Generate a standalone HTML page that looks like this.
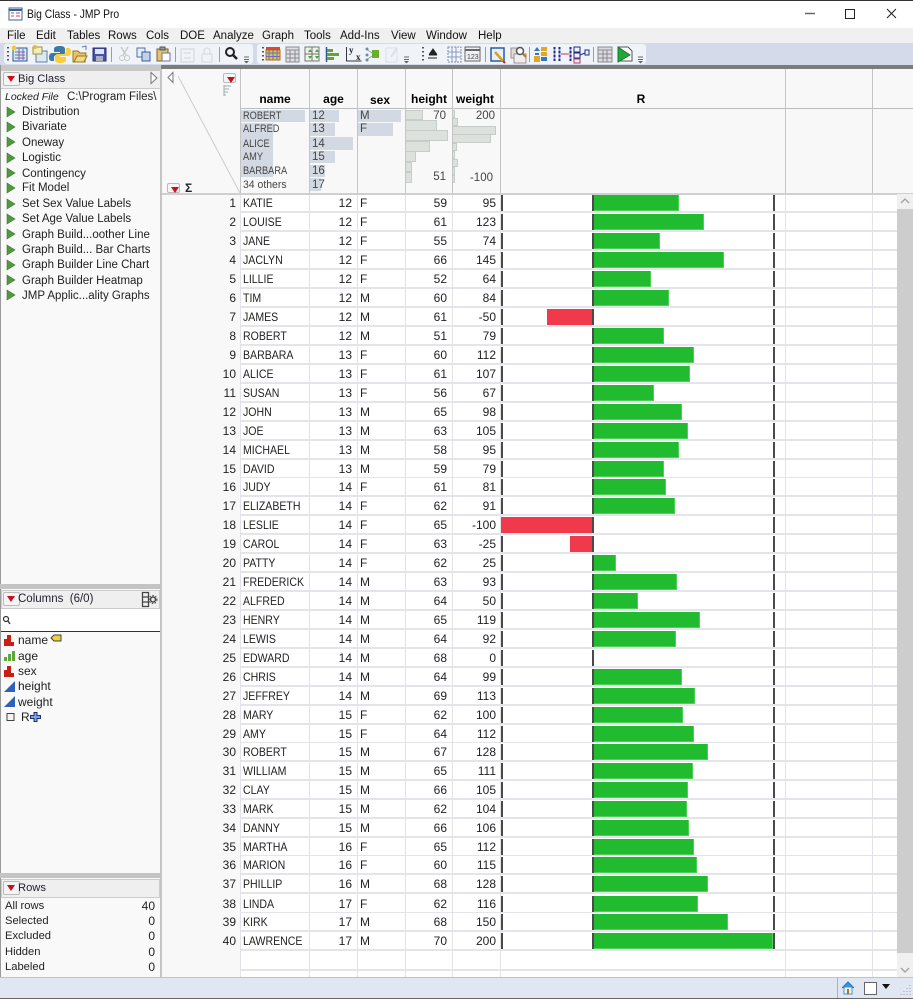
<!DOCTYPE html>
<html><head><meta charset="utf-8"><title>Big Class - JMP Pro</title>
<style>
*{box-sizing:border-box}
html,body{margin:0;padding:0;width:913px;height:999px;overflow:hidden;background:#fff}
body{position:relative;font:12px "Liberation Sans",sans-serif;color:#222}
.a{position:absolute;white-space:nowrap;line-height:14px}
.b{position:absolute}
.m{top:29px;font-size:11.5px;color:#111}
.l{left:22px;font-size:11.5px}
.p{font-size:11.2px}
.r{position:absolute;left:162px;width:735px;height:19px;background:
linear-gradient(#4a4a4a,#4a4a4a) 339px var(--t,1px)/2px 16px no-repeat,
linear-gradient(#4a4a4a,#4a4a4a) 430px var(--t,1px)/2px 16px no-repeat,
linear-gradient(#4a4a4a,#4a4a4a) 611px var(--t,1px)/2px 16px no-repeat,
linear-gradient(#f8f8f8,#f8f8f8) 0 0/78px 100% no-repeat,
linear-gradient(#e4e4ea,#e4e4ea) 0 var(--o,17px)/100% 2px no-repeat,#fff;line-height:17px}
.f{--t:0px;--o:16px;height:18px}
.r span{position:absolute;top:1px;line-height:16px;white-space:nowrap}
.f span{top:0}
.f .g{top:0 !important}
.r span:nth-child(1){right:661px}
.r span:nth-child(2){left:81px;transform:scaleX(.88);transform-origin:0 50%}
.r span:nth-child(3){right:545px}
.r span:nth-child(4){left:198px}
.r span:nth-child(5){right:450px}
.r span:nth-child(6){right:401px}
.r .g{left:432px;top:1px;height:16px;background:#20bb2e;border-right:1px solid #4fcf58;border-bottom:1px solid #4fcf58}
.r .n{top:1px;height:16px;background:#f03a4c;right:auto}
.v{position:absolute;top:195px;width:1px;height:782px;background:#e2e2ea}
.h{position:absolute;top:69px;width:1px;height:124px;background:#c4c4c4}
.t{top:92px;font-weight:bold;font-size:12px;color:#000;text-align:center}
.s{position:absolute;background:#d3d9e3}
.d{position:absolute;background:#dde1dd;border:1px solid #c6ccc6;border-left:0}
.x{font-size:11.5px;color:#444}
.y{font-size:11px;color:#444;transform:scaleX(.84);transform-origin:0 50%}
.tri{position:absolute;width:17px;height:14px;background:#f4f4f4;border:1px solid #bbb;border-radius:2px}
.tri:after{content:"";position:absolute;left:3px;top:3px;border:4.500px solid transparent;border-top:6px solid #c8101c;border-bottom:0}
</style></head><body>
<!-- chrome -->
<div class="b" style="left:0;top:0;width:913px;height:1px;background:#333"></div>
<div class="b" style="left:0;top:28px;width:913px;height:15px;background:#f0f0f0"></div>
<div class="b" style="left:0;top:43px;width:913px;height:22px;background:#d5daea"></div>
<div class="b" style="left:4px;top:44px;width:249px;height:20px;background:#f0f4f9;border-radius:3px"></div>
<div class="b" style="left:257px;top:44px;width:389px;height:20px;background:#f0f4f9;border-radius:3px"></div>
<div class="b" style="left:0;top:65px;width:161px;height:6px;background:#c8c8c8"></div>
<div class="b" style="left:161px;top:65px;width:752px;height:4px;background:#7c7c7c"></div>
<div class="a" style="left:27px;top:7px;font-size:12px;color:#111;transform:scaleX(.86);transform-origin:0 50%">Big Class - JMP Pro</div>
<div class="a m" style="left:7px">File</div>
<div class="a m" style="left:36px">Edit</div>
<div class="a m" style="left:67px">Tables</div>
<div class="a m" style="left:108px">Rows</div>
<div class="a m" style="left:146px">Cols</div>
<div class="a m" style="left:180px">DOE</div>
<div class="a m" style="left:213px">Analyze</div>
<div class="a m" style="left:262px">Graph</div>
<div class="a m" style="left:304px">Tools</div>
<div class="a m" style="left:340px">Add-Ins</div>
<div class="a m" style="left:391px">View</div>
<div class="a m" style="left:426px">Window</div>
<div class="a m" style="left:478px">Help</div>

<!-- left panels -->
<div class="b" style="left:0;top:71px;width:160px;height:906px;background:#f9f9f9"></div>
<div class="b" style="left:0;top:65px;width:1px;height:912px;background:#9a9a9a"></div>
<div class="b" style="left:160px;top:69px;width:2px;height:908px;background:#c4c4c4"></div>
<div class="b" style="left:1px;top:71px;width:159px;height:18px;background:#efefef;border-bottom:1px solid #ccc"></div>
<div class="tri" style="left:3px;top:72px"></div>
<div class="a p" style="left:18px;top:72px;color:#223">Big Class</div>
<div class="a" style="left:5px;top:90px;font-size:10.5px"><i>Locked File</i></div>
<div class="a" style="left:67px;top:90px;width:92px;overflow:hidden;font-size:11.5px">C:\Program Files\</div>
<div class="a l" style="top:105px">Distribution</div>
<div class="a l" style="top:120px">Bivariate</div>
<div class="a l" style="top:136px">Oneway</div>
<div class="a l" style="top:151px">Logistic</div>
<div class="a l" style="top:167px">Contingency</div>
<div class="a l" style="top:181px">Fit Model</div>
<div class="a l" style="top:197px">Set Sex Value Labels</div>
<div class="a l" style="top:212px">Set Age Value Labels</div>
<div class="a l" style="top:228px">Graph Build...oother Line</div>
<div class="a l" style="top:243px">Graph Build... Bar Charts</div>
<div class="a l" style="top:258px">Graph Builder Line Chart</div>
<div class="a l" style="top:274px">Graph Builder Heatmap</div>
<div class="a l" style="top:289px">JMP Applic...ality Graphs</div>

<div class="b" style="left:0;top:584px;width:160px;height:5px;background:#c4c4c4"></div>
<div class="b" style="left:1px;top:590px;width:159px;height:19px;background:#efefef;border:1px solid #ccc"></div>
<div class="tri" style="left:3px;top:592px"></div>
<div class="a" style="left:18px;top:592px;color:#223;font-size:11.5px">Columns &nbsp;(6/0)</div>
<div class="b" style="left:1px;top:609px;width:159px;height:22px;background:#fff"></div>
<div class="b" style="left:1px;top:631px;width:159px;height:1px;background:#333"></div>
<div class="a" style="left:18px;top:633px">name</div>
<div class="a" style="left:18px;top:649px">age</div>
<div class="a" style="left:18px;top:664px">sex</div>
<div class="a" style="left:18px;top:679px">height</div>
<div class="a" style="left:18px;top:695px">weight</div>
<div class="a" style="left:21px;top:710px">R</div>

<div class="b" style="left:0;top:873px;width:160px;height:5px;background:#c4c4c4"></div>
<div class="b" style="left:1px;top:879px;width:159px;height:19px;background:#efefef;border:1px solid #ccc"></div>
<div class="tri" style="left:3px;top:881px"></div>
<div class="a p" style="left:18px;top:881px;color:#223">Rows</div>
<div class="a p" style="left:5px;top:899px">All rows</div><div class="a" style="right:758px;top:899px">40</div>
<div class="a p" style="left:5px;top:914px">Selected</div><div class="a" style="right:758px;top:914px">0</div>
<div class="a p" style="left:5px;top:929px">Excluded</div><div class="a" style="right:758px;top:929px">0</div>
<div class="a p" style="left:5px;top:945px">Hidden</div><div class="a" style="right:758px;top:945px">0</div>
<div class="a p" style="left:5px;top:960px">Labeled</div><div class="a" style="right:758px;top:960px">0</div>

<!-- table header -->
<div class="b" style="left:162px;top:69px;width:751px;height:125px;background:#f8f8f8"></div>
<div class="b" style="left:241px;top:108px;width:672px;height:1px;background:#bdbdbd"></div>
<div class="b" style="left:162px;top:193px;width:751px;height:2px;background:#cfcfcf"></div>
<div class="h" style="left:240px"></div><div class="h" style="left:309px"></div><div class="h" style="left:357px"></div><div class="h" style="left:405px"></div><div class="h" style="left:452px"></div><div class="h" style="left:500px"></div><div class="h" style="left:785px"></div><div class="h" style="left:872px"></div>
<div class="a t" style="left:241px;width:68px">name</div>
<div class="a t" style="left:310px;width:47px">age</div>
<div class="a t" style="left:358px;width:44px;top:93px">sex</div>
<div class="a t" style="left:406px;width:46px">height</div>
<div class="a t" style="left:453px;width:44px">weight</div>
<div class="a t" style="left:501px;width:280px">R</div>

<div class="s" style="left:241px;top:110px;width:64px;height:12px"></div>
<div class="s" style="left:241px;top:123px;width:32px;height:54px"></div>
<div class="s" style="left:310px;top:110px;width:29px;height:12px"></div>
<div class="s" style="left:310px;top:123px;width:25px;height:13px"></div>
<div class="s" style="left:310px;top:137px;width:43px;height:13px"></div>
<div class="s" style="left:310px;top:151px;width:25px;height:12px"></div>
<div class="s" style="left:310px;top:165px;width:15px;height:12px"></div>
<div class="s" style="left:310px;top:178px;width:11px;height:13px"></div>
<div class="s" style="left:358px;top:110px;width:43px;height:12px"></div>
<div class="s" style="left:358px;top:123px;width:35px;height:13px"></div>
<div class="a y" style="left:243px;top:109px">ROBERT</div>
<div class="a y" style="left:243px;top:122px">ALFRED</div>
<div class="a y" style="left:243px;top:137px">ALICE</div>
<div class="a y" style="left:243px;top:150px">AMY</div>
<div class="a y" style="left:243px;top:164px">BARBARA</div>
<div class="a y" style="left:243px;top:178px;transform:scaleX(.95)">34 others</div>
<div class="a x" style="left:312px;top:109px">12</div>
<div class="a x" style="left:312px;top:122px">13</div>
<div class="a x" style="left:312px;top:137px">14</div>
<div class="a x" style="left:312px;top:150px">15</div>
<div class="a x" style="left:312px;top:164px">16</div>
<div class="a x" style="left:312px;top:178px">17</div>
<div class="a x" style="left:360px;top:109px">M</div>
<div class="a x" style="left:360px;top:122px">F</div>

<div class="d" style="left:406px;top:110px;width:17px;height:10px"></div>
<div class="d" style="left:406px;top:120px;width:31px;height:11px"></div>
<div class="d" style="left:406px;top:130px;width:42px;height:11px"></div>
<div class="d" style="left:406px;top:141px;width:24px;height:11px"></div>
<div class="d" style="left:406px;top:151px;width:10px;height:11px"></div>
<div class="d" style="left:406px;top:162px;width:6px;height:10px"></div>
<div class="d" style="left:406px;top:172px;width:6px;height:11px"></div>
<div class="d" style="left:453px;top:110px;width:2px;height:8px"></div>
<div class="d" style="left:453px;top:118px;width:5px;height:8px"></div>
<div class="d" style="left:453px;top:126px;width:43px;height:9px"></div>
<div class="d" style="left:453px;top:134px;width:38px;height:9px"></div>
<div class="d" style="left:453px;top:143px;width:4px;height:8px"></div>
<div class="d" style="left:453px;top:151px;width:2px;height:8px"></div>
<div class="d" style="left:453px;top:159px;width:5px;height:8px"></div>
<div class="d" style="left:453px;top:167px;width:2px;height:8px"></div>
<div class="d" style="left:453px;top:175px;width:2px;height:8px"></div>
<div class="a x" style="right:467px;top:109px">70</div>
<div class="a x" style="right:467px;top:170px">51</div>
<div class="a x" style="right:418px;top:109px">200</div>
<div class="a x" style="right:420px;top:171px">-100</div>
<div class="tri" style="left:223px;top:73px;width:13px;height:10px"></div>
<div class="tri" style="left:167px;top:183px;width:13px;height:10px"></div>

<!-- rows -->
<div class="b" style="left:162px;top:195px;width:735px;height:782px;background:linear-gradient(#f8f8f8,#f8f8f8) 0 0/78px 100% no-repeat,#fff"></div>
<div class="r f" style="top:195px"><span>1</span><span>KATIE</span><span>12</span><span>F</span><span>59</span><span>95</span><span class="g" style="width:85px"></span></div>
<div class="r" style="top:213px"><span>2</span><span>LOUISE</span><span>12</span><span>F</span><span>61</span><span>123</span><span class="g" style="width:110px"></span></div>
<div class="r" style="top:232px"><span>3</span><span>JANE</span><span>12</span><span>F</span><span>55</span><span>74</span><span class="g" style="width:66px"></span></div>
<div class="r" style="top:251px"><span>4</span><span>JACLYN</span><span>12</span><span>F</span><span>66</span><span>145</span><span class="g" style="width:130px"></span></div>
<div class="r" style="top:270px"><span>5</span><span>LILLIE</span><span>12</span><span>F</span><span>52</span><span>64</span><span class="g" style="width:57px"></span></div>
<div class="r" style="top:289px"><span>6</span><span>TIM</span><span>12</span><span>M</span><span>60</span><span>84</span><span class="g" style="width:75px"></span></div>
<div class="r" style="top:308px"><span>7</span><span>JAMES</span><span>12</span><span>M</span><span>61</span><span>-50</span><span class="n" style="left:385px;width:45px"></span></div>
<div class="r" style="top:327px"><span>8</span><span>ROBERT</span><span>12</span><span>M</span><span>51</span><span>79</span><span class="g" style="width:70px"></span></div>
<div class="r" style="top:346px"><span>9</span><span>BARBARA</span><span>13</span><span>F</span><span>60</span><span>112</span><span class="g" style="width:100px"></span></div>
<div class="r" style="top:365px"><span>10</span><span>ALICE</span><span>13</span><span>F</span><span>61</span><span>107</span><span class="g" style="width:96px"></span></div>
<div class="r" style="top:384px"><span>11</span><span>SUSAN</span><span>13</span><span>F</span><span>56</span><span>67</span><span class="g" style="width:60px"></span></div>
<div class="r" style="top:403px"><span>12</span><span>JOHN</span><span>13</span><span>M</span><span>65</span><span>98</span><span class="g" style="width:88px"></span></div>
<div class="r" style="top:422px"><span>13</span><span>JOE</span><span>13</span><span>M</span><span>63</span><span>105</span><span class="g" style="width:94px"></span></div>
<div class="r" style="top:441px"><span>14</span><span>MICHAEL</span><span>13</span><span>M</span><span>58</span><span>95</span><span class="g" style="width:85px"></span></div>
<div class="r" style="top:460px"><span>15</span><span>DAVID</span><span>13</span><span>M</span><span>59</span><span>79</span><span class="g" style="width:70px"></span></div>
<div class="r" style="top:478px"><span>16</span><span>JUDY</span><span>14</span><span>F</span><span>61</span><span>81</span><span class="g" style="width:72px"></span></div>
<div class="r" style="top:497px"><span>17</span><span>ELIZABETH</span><span>14</span><span>F</span><span>62</span><span>91</span><span class="g" style="width:81px"></span></div>
<div class="r" style="top:516px"><span>18</span><span>LESLIE</span><span>14</span><span>F</span><span>65</span><span>-100</span><span class="n" style="left:339px;width:91px"></span></div>
<div class="r" style="top:535px"><span>19</span><span>CAROL</span><span>14</span><span>F</span><span>63</span><span>-25</span><span class="n" style="left:408px;width:22px"></span></div>
<div class="r" style="top:554px"><span>20</span><span>PATTY</span><span>14</span><span>F</span><span>62</span><span>25</span><span class="g" style="width:22px"></span></div>
<div class="r" style="top:573px"><span>21</span><span>FREDERICK</span><span>14</span><span>M</span><span>63</span><span>93</span><span class="g" style="width:83px"></span></div>
<div class="r" style="top:592px"><span>22</span><span>ALFRED</span><span>14</span><span>M</span><span>64</span><span>50</span><span class="g" style="width:44px"></span></div>
<div class="r" style="top:611px"><span>23</span><span>HENRY</span><span>14</span><span>M</span><span>65</span><span>119</span><span class="g" style="width:106px"></span></div>
<div class="r" style="top:630px"><span>24</span><span>LEWIS</span><span>14</span><span>M</span><span>64</span><span>92</span><span class="g" style="width:82px"></span></div>
<div class="r" style="top:649px"><span>25</span><span>EDWARD</span><span>14</span><span>M</span><span>68</span><span>0</span></div>
<div class="r" style="top:668px"><span>26</span><span>CHRIS</span><span>14</span><span>M</span><span>64</span><span>99</span><span class="g" style="width:88px"></span></div>
<div class="r" style="top:687px"><span>27</span><span>JEFFREY</span><span>14</span><span>M</span><span>69</span><span>113</span><span class="g" style="width:101px"></span></div>
<div class="r" style="top:706px"><span>28</span><span>MARY</span><span>15</span><span>F</span><span>62</span><span>100</span><span class="g" style="width:89px"></span></div>
<div class="r" style="top:725px"><span>29</span><span>AMY</span><span>15</span><span>F</span><span>64</span><span>112</span><span class="g" style="width:100px"></span></div>
<div class="r" style="top:743px"><span>30</span><span>ROBERT</span><span>15</span><span>M</span><span>67</span><span>128</span><span class="g" style="width:114px"></span></div>
<div class="r" style="top:762px"><span>31</span><span>WILLIAM</span><span>15</span><span>M</span><span>65</span><span>111</span><span class="g" style="width:99px"></span></div>
<div class="r" style="top:781px"><span>32</span><span>CLAY</span><span>15</span><span>M</span><span>66</span><span>105</span><span class="g" style="width:94px"></span></div>
<div class="r" style="top:800px"><span>33</span><span>MARK</span><span>15</span><span>M</span><span>62</span><span>104</span><span class="g" style="width:93px"></span></div>
<div class="r" style="top:819px"><span>34</span><span>DANNY</span><span>15</span><span>M</span><span>66</span><span>106</span><span class="g" style="width:95px"></span></div>
<div class="r" style="top:838px"><span>35</span><span>MARTHA</span><span>16</span><span>F</span><span>65</span><span>112</span><span class="g" style="width:100px"></span></div>
<div class="r" style="top:856px"><span>36</span><span>MARION</span><span>16</span><span>F</span><span>60</span><span>115</span><span class="g" style="width:103px"></span></div>
<div class="r" style="top:875px"><span>37</span><span>PHILLIP</span><span>16</span><span>M</span><span>68</span><span>128</span><span class="g" style="width:114px"></span></div>
<div class="r" style="top:894px;--t:2px;--o:18px"><span style="top:2px">38</span><span style="top:2px">LINDA</span><span style="top:2px">17</span><span style="top:2px">F</span><span style="top:2px">62</span><span style="top:2px">116</span><span class="g" style="width:104px;top:2px"></span></div>
<div class="r" style="top:913px"><span>39</span><span>KIRK</span><span>17</span><span>M</span><span>68</span><span>150</span><span class="g" style="width:134px"></span></div>
<div class="r" style="top:932px"><span>40</span><span>LAWRENCE</span><span>17</span><span>M</span><span>70</span><span>200</span><span class="g" style="width:179px"></span></div>
<div class="b" style="left:162px;top:951px;width:735px;height:26px;background:linear-gradient(#f8f8f8,#f8f8f8) 0 0/78px 100% no-repeat,linear-gradient(#e4e4ea,#e4e4ea) 0 18px/100% 2px no-repeat,#fff"></div>
<div class="v" style="left:240px"></div><div class="v" style="left:309px"></div><div class="v" style="left:357px"></div><div class="v" style="left:405px"></div><div class="v" style="left:452px"></div><div class="v" style="left:500px"></div><div class="v" style="left:785px"></div><div class="v" style="left:872px"></div>

<!-- scrollbar / status -->
<div class="b" style="left:897px;top:194px;width:16px;height:783px;background:#f0f0f0"></div>
<div class="b" style="left:897px;top:209px;width:16px;height:744px;background:#cdcdcd"></div>
<div class="b" style="left:0;top:977px;width:913px;height:22px;background:#e1e7f2;border-top:1px solid #b8c2d8;border-bottom:1px solid #666"></div>
<div class="b" style="left:837px;top:978px;width:1px;height:20px;background:#a8b0c0"></div>

<!-- icons -->
<svg class="b" style="left:0;top:0" width="913" height="999" viewBox="0 0 913 999" xmlns="http://www.w3.org/2000/svg">
<!-- window -->
<rect x="9" y="8" width="13" height="12" fill="#fff" stroke="#38609a"/><path d="M9 10h13" stroke="#38609a" stroke-width="2"/><path d="M11 13h3M16 13h4M11 16h3M16 16h4" stroke="#c44"/>
<path d="M805 13.500h10" stroke="#666" stroke-width="1.500"/>
<rect x="845.500" y="9.500" width="9" height="9" fill="none" stroke="#222"/>
<path d="M887 9l9 9M896 9l-9 9" stroke="#222"/>
<!-- grips -->
<path d="M8 47v14M263 47v14M423 47v14" stroke="#222" stroke-dasharray="1.500 2.500" stroke-width="1.500"/>
<!-- toolbar 1 -->
<rect x="13" y="48" width="14" height="13" fill="#dbe6f4" stroke="#245a9e"/><path d="M15 52h10M15 55h10M15 58h10M19 49v11M23 49v11" stroke="#7a6aa0"/><circle cx="14" cy="48" r="2.500" fill="#f5c93a"/>
<rect x="36" y="51" width="11" height="11" fill="#dfe8f2" stroke="#5680a8"/><rect x="33" y="47" width="9" height="7" fill="#f3ecc0" stroke="#a09040"/><circle cx="35" cy="47" r="2" fill="#e6b93a"/>
<path d="M60 46c-4 0-6 1-6 3v3h6v1h-8c-2 0-3 2-3 4 0 3 1 4 3 4h2v-3c0-2 1-3 3-3h5c2 0 3-1 3-3v-3c0-2-2-3-5-3z" fill="#3b77a8"/><path d="M60 63c4 0 6-1 6-3v-3h-6v-1h8c2 0 3-2 3-4 0-3-1-4-3-4h-2v3c0 2-1 3-3 3h-5c-2 0-3 1-3 3v3c0 2 2 3 5 3z" fill="#f7cf3f"/>
<path d="M73 51h5l2 2h6l-1 9H73z" fill="#e9c467" stroke="#98761e"/><path d="M74 62l3-6h10l-3 6z" fill="#f4d98a" stroke="#98761e"/><path d="M82 47l4-1 0 4" stroke="#5a7ab0" fill="none"/>
<rect x="93" y="48" width="13" height="13" fill="#4a52a8" stroke="#2a2f70"/><rect x="95" y="49" width="9" height="5" fill="#dfe3f6"/><rect x="96" y="56" width="7" height="5" fill="#aab0c8"/>
<path d="M111.500 47v15M175.500 47v15M219.500 47v15M485.500 47v15M529.500 47v15M593.500 47v15" stroke="#9aa0a8"/>
<path d="M121 47l5 8M128 47l-5 8" stroke="#c8c8c8" stroke-width="1.500"/><circle cx="122" cy="58" r="2.500" fill="none" stroke="#c8c8c8"/><circle cx="127" cy="58" r="2.500" fill="none" stroke="#c8c8c8"/>
<rect x="137" y="48" width="8" height="9" fill="#e8eef8" stroke="#5070a8"/><rect x="142" y="52" width="8" height="9" fill="#c0d2ec" stroke="#3a5c9a"/>
<rect x="157" y="49" width="11" height="12" fill="#e5c470" stroke="#7a6030"/><rect x="160" y="47" width="5" height="3" fill="#999" stroke="#555"/><rect x="162" y="53" width="8" height="8" fill="#fff" stroke="#7070a0"/>
<rect x="181" y="49" width="13" height="13" fill="none" stroke="#d0d4d8"/><path d="M184 53h7M184 58h7" stroke="#d0d4d8"/>
<rect x="202" y="54" width="10" height="8" fill="none" stroke="#d4d8dc"/><path d="M204 54v-3a3 3 0 0 1 6 0v3" fill="none" stroke="#d4d8dc"/>
<circle cx="230" cy="52" r="4" fill="none" stroke="#222" stroke-width="2"/><path d="M233 55l4 4" stroke="#222" stroke-width="2.500"/>
<path d="M244 57h5M244 59.500h5" stroke="#666"/><path d="M244 61l2.500 2.500 2.500-2.500z" fill="#666"/>
<!-- toolbar 2 -->
<rect x="266" y="50" width="14" height="10" fill="#f4b54a" stroke="#b36a1c"/><path d="M266 47h14v3h-14z" fill="#d84a30"/><path d="M269 50v10M273 50v10M277 50v10M266 53h14M266 56.500h14" stroke="#5a78c0"/>
<rect x="286" y="47" width="13" height="15" fill="#dfdfe4" stroke="#8a8a92"/><path d="M286 50h13M286 54h13M286 58h13M290 50v12M295 50v12" stroke="#8a8a92"/>
<rect x="305" y="47" width="14" height="14" fill="#eef2e8" stroke="#707870"/><path d="M312 47v14M305 54h14" stroke="#707870"/><path d="M308 52l2-3 2 3zM315 52l2-3 2 3zM308 56l2 3 2-3zM315 56l2 3 2-3z" fill="#4aa040"/>
<path d="M326.500 47v15" stroke="#2a5a9a" stroke-width="1.500"/><path d="M327 49h6v3h-6zM327 53h12v3h-12zM327 57h7v3h-7z" fill="#6ca32e"/>
<path d="M346.500 47v14h15" stroke="#334" fill="none"/><text x="349" y="53" font-family="Liberation Serif" font-size="9" font-weight="bold" fill="#223">y</text><text x="356" y="60" font-family="Liberation Serif" font-size="9" font-weight="bold" fill="#223">x</text>
<path d="M366 49l6 4M366 60l6-4" stroke="#8ab" fill="none"/><circle cx="367" cy="49" r="1.500" fill="#789"/><circle cx="367" cy="55" r="1.500" fill="#789"/><circle cx="367" cy="60" r="1.500" fill="#789"/><rect x="372" y="50" width="7" height="8" fill="#6cb02a"/>
<rect x="386" y="48" width="11" height="14" fill="none" stroke="#dce0e4"/><path d="M391 57l6-9" stroke="#dce0e4" stroke-width="2"/>
<path d="M404 57h5M404 59.500h5" stroke="#666"/><path d="M404 61l2.500 2.500 2.500-2.500z" fill="#666"/>
<path d="M433 49l3.500 5h-7zM429 55h8M428 58h9" fill="#222" stroke="#222"/>
<rect x="448" y="47" width="13" height="15" fill="#f4f6fb" stroke="#7a8cb0" stroke-dasharray="2 1"/><path d="M452 47v15M456 47v15M448 52h13M448 57h13" stroke="#8a9cc0"/>
<rect x="465" y="47" width="15" height="14" fill="#f0f0f2" stroke="#666"/><path d="M465 50h15" stroke="#666" stroke-width="2"/><text x="467" y="59" font-family="Liberation Sans" font-size="7" fill="#445">123</text>
<rect x="491" y="48" width="13" height="13" fill="#eaf0fb" stroke="#2a5aa8" stroke-width="1.500"/><path d="M495 52l8 9" stroke="#d8a020" stroke-width="2.500"/><path d="M503 61l2 2" stroke="#d02020" stroke-width="2"/>
<rect x="511" y="48" width="11" height="10" fill="#ddd" stroke="#a09090"/><rect x="514" y="54" width="12" height="9" fill="#eee" stroke="#a09090"/><circle cx="520" cy="51" r="3.500" fill="#fff" stroke="#555" stroke-width="1.500"/><path d="M523 54l3 3" stroke="#b87a20" stroke-width="2"/>
<path d="M534 51l3-4 3 4zM535 53h4v2h-4z" fill="#3478c0"/><rect x="541" y="47" width="6" height="4" fill="#e0a828"/><rect x="541" y="52" width="6" height="4" fill="#e0a828"/><rect x="541" y="57" width="6" height="4" fill="#3478c0"/>
<rect x="534" y="56" width="6" height="6" fill="#e0a828"/>
<path d="M554.500 47v14M559.500 47v14M570.500 47v14" stroke="#1e2a88" stroke-width="2"/><path d="M553 50h8M553 54h8M553 58h8M569 50h4M569 54h4M569 58h4" stroke="#fff"/><path d="M561 54h8" stroke="#c83060"/>
<rect x="574" y="47" width="6" height="5" fill="none" stroke="#1e2a88"/><rect x="574" y="53" width="6" height="5" fill="none" stroke="#1e2a88"/><rect x="574" y="59" width="6" height="4" fill="none" stroke="#c83060"/><path d="M580 55l5-2" stroke="#1e2a88" fill="none"/><rect x="585" y="50" width="4" height="5" fill="none" stroke="#1e2a88"/>
<rect x="598" y="47" width="14" height="15" fill="#dcdce0" stroke="#8a8a92"/><path d="M598 50h14M598 54h14M598 58h14M603 50v12M607 50v12" stroke="#8a8a92"/>
<path d="M619 47h9l4 4v10h-13z" fill="#fff" stroke="#555"/><path d="M618 47l12 8-12 7z" fill="#22a83a" stroke="#157a28"/>
<path d="M638 57h5M638 59.500h5" stroke="#666"/><path d="M638 61l2.500 2.500 2.500-2.500z" fill="#666"/>
<!-- panel triangles -->
<path d="M151 72.500l6 5.500-6 5.500z" fill="#fff" stroke="#777"/>
<path d="M173 72.500l-5 5 5 5z" fill="#fff" stroke="#777"/>
<path d="M224 85v11M224 86h7M224 89h5M224 92h4M224 95h2" stroke="#9ab0a8"/>
<path d="M178 76L240 193" stroke="#ccc"/>
<text x="185" y="192" font-family="Liberation Sans" font-size="12" font-weight="bold" fill="#223">Σ</text>
<!-- green triangles -->
<g fill="#4f9a3e" stroke="#3a7a30" stroke-width=".6">
<path d="M7 107l8 5-8 5zM7 122l8 5-8 5zM7 137l8 5-8 5zM7 153l8 5-8 5zM7 168l8 5-8 5zM7 183l8 5-8 5zM7 199l8 5-8 5zM7 214l8 5-8 5zM7 229l8 5-8 5zM7 245l8 5-8 5zM7 260l8 5-8 5zM7 275l8 5-8 5zM7 290l8 5-8 5z"/>
</g>
<!-- columns panel -->
<path d="M142.500 592.500h6v4.500h-6zM142.500 597h6v5h-6zM142.500 602h6v4.500h-6z" fill="none" stroke="#444" stroke-width="1.300"/>
<circle cx="153" cy="599.500" r="2.500" fill="none" stroke="#444" stroke-width="1.500"/><circle cx="153" cy="599.500" r="4" fill="none" stroke="#444" stroke-dasharray="1.500 1.500"/>
<circle cx="6" cy="619" r="2.500" fill="none" stroke="#333" stroke-width="1.200"/><path d="M8 621l2 3" stroke="#333" stroke-width="1.300"/>
<path d="M4 639h3v7H4zM7 635h4v11H7zM11 642h3v4h-3z" fill="#c81f14"/>
<path d="M4 670h3v7H4zM7 666h4v11H7zM11 673h3v4h-3z" fill="#c81f14"/>
<path d="M4 657h3v4H4zM8 654h3v7H8zM12 651h3v10h-3z" fill="#5fa840"/>
<path d="M4 692l11-11v11zM4 707l11-11v11z" fill="#2d62b8"/>
<rect x="7" y="713.500" width="7" height="7" fill="#f4f4f4" stroke="#444"/>
<path d="M51 638l3-3h7v6h-7z" fill="#f0d040" stroke="#444"/>
<path d="M34 712.500h3v3h3.500v3H37v3h-3v-3h-3.500v-3H34z" fill="#7ea4dc" stroke="#1e2e78"/>
<!-- scrollbar arrows -->
<path d="M901 203l4-4 4 4M901 968l4 4 4-4" fill="none" stroke="#a0a0a0" stroke-width="1.300"/>
<!-- status -->
<path d="M842 988l6-6 6 6" fill="#3a96d8" stroke="#1a78c0"/><rect x="844" y="987" width="8" height="7" fill="#f4f4f4" stroke="#3a96d8"/><rect x="847" y="989" width="2" height="5" fill="#b07020"/>
<rect x="864.500" y="982.500" width="12" height="12" fill="#fff" stroke="#666"/>
<path d="M882 984h8l-4 5z" fill="#111"/>
<path d="M910 985v1M907 988v1M910 988v1M904 991v1M907 991v1M910 991v1M901 994v1M904 994v1M907 994v1M910 994v1" stroke="#9aa0a8"/>
</svg>
</body></html>
